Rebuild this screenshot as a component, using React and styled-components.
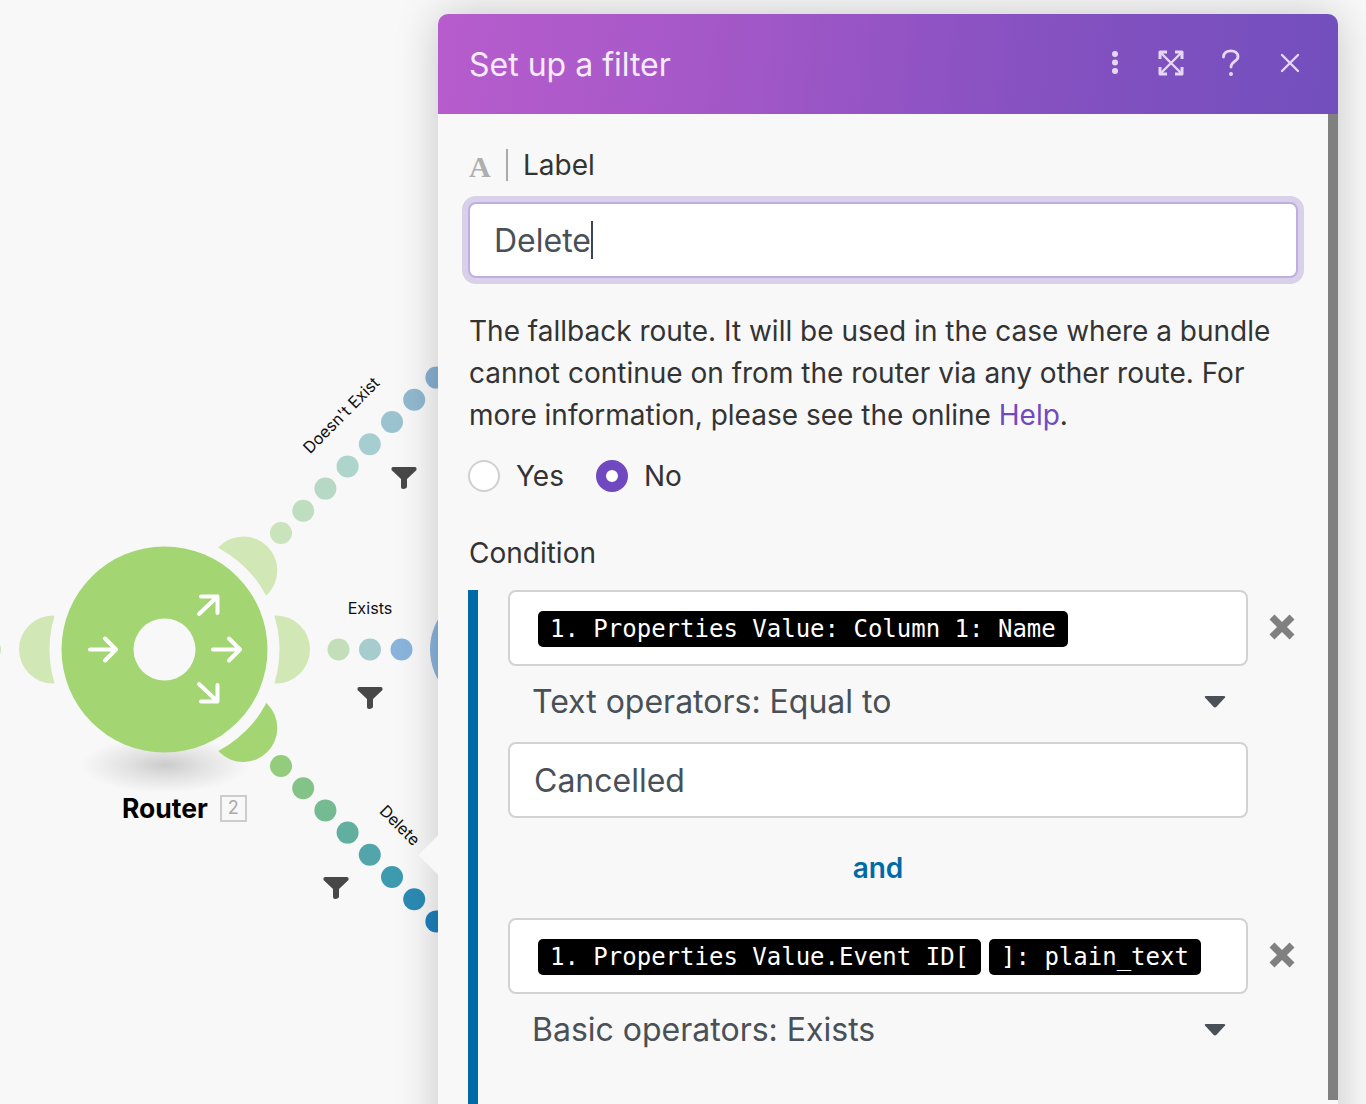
import React from "react";
import styled, { createGlobalStyle } from "styled-components";

const GlobalStyle = createGlobalStyle`
	html, body {
		margin: 0;
		padding: 0;
		background: #f8f8f8;
		font-family: Inter, "Noto Sans", sans-serif;
	}
`;

const Page = styled.div`
	position: relative;
	display: flex;
	width: 1366px;
	height: 1104px;
	padding: 14px 0 0 438px;
	box-sizing: border-box;
	overflow: hidden;
	background: #f8f8f8;
`;

/* free canvas: router diagram behind the panel */
const Canvas = styled.div`
	position: absolute;
	inset: 0;
`;

const CanvasSvg = styled.svg`
	position: absolute;
	top: 0;
	left: 0;
`;

const RouteLabel = styled.div`
	position: absolute;
	left: ${(p) => p.$x}px;
	top: ${(p) => p.$y}px;
	transform: translate(-50%, -50%) rotate(${(p) => p.$angle || 0}deg);
	font-size: 16.2px;
	line-height: 20px;
	color: #111;
	white-space: nowrap;
`;

const NodeName = styled.div`
	position: absolute;
	left: 122px;
	top: 793px;
	display: flex;
	align-items: center;
	gap: 12px;
	font-size: 26.5px;
	font-weight: 700;
	line-height: 30px;
	color: #000;
`;

const NodeBadge = styled.span`
	display: flex;
	align-items: center;
	justify-content: center;
	width: 27px;
	height: 27px;
	box-sizing: border-box;
	border: 2px solid #ccc;
	font-size: 18px;
	font-weight: 400;
	color: #aaa;
`;

const Panel = styled.div`
	position: relative;
	display: flex;
	flex-direction: column;
	width: 900px;
	height: 1200px;
	flex: none;
	border-radius: 10px 10px 0 0;
	background: #f8f8f8;
	box-shadow: 0 0 44px rgba(0, 0, 0, 0.2);
`;

/* little pointer on the panel's left edge, towards the edited route */
const Pointer = styled.span`
	position: absolute;
	left: -14px;
	top: 827px;
	width: 28px;
	height: 28px;
	background: #f8f8f8;
	transform: rotate(45deg);
`;

const Header = styled.div`
	position: relative;
	display: flex;
	align-items: center;
	height: 100px;
	flex: none;
	padding-left: 31px;
	border-radius: 10px 10px 0 0;
	background: linear-gradient(97deg, #b75ccd 0%, #a558c8 30%, #8751c1 65%, #724fbd 100%);
`;

const Title = styled.h1`
	flex: 1;
	margin: 0;
	font-size: 32px;
	font-weight: 400;
	color: #f5ebfb;
`;

const HeaderIcons = styled.div`
	display: flex;
	align-items: center;
	padding: 0 8px 3px 0;
`;

const IconSlot = styled.span`
	display: flex;
	justify-content: center;
	align-items: center;
	width: ${(p) => p.$w}px;
	color: #e6d8f5;
`;

const ScrollBar = styled.div`
	position: absolute;
	top: 100px;
	right: 0;
	width: 10px;
	height: 986px;
	background: #808080;
`;

const Body = styled.div`
	position: relative;
	display: flex;
	flex-direction: column;
	padding: 35px 0 0 30px;
`;

const LabelRow = styled.div`
	display: flex;
	align-items: center;
	height: 32px;
	padding-left: 1px;
	color: #333;
	font-size: 28px;
`;

const LabelGlyph = styled.span`
	width: 37px;
	font-family: "Liberation Serif", serif;
	font-weight: 700;
	font-size: 30px;
	line-height: 32px;
	padding-top: 4px;
	color: #aeaeae;
`;

const LabelDivider = styled.span`
	width: 2px;
	height: 32px;
	margin-right: 15px;
	background: #aaa;
`;

const TextBox = styled.div`
	display: flex;
	align-items: center;
	width: ${(p) => p.$width}px;
	height: 76px;
	box-sizing: border-box;
	padding-left: 24px;
	border: 2px solid ${(p) => (p.$focus ? "#c0aee0" : "#d2d2d2")};
	border-radius: 8px;
	background: #fff;
	font-size: 32px;
	color: #495057;
	${(p) => p.$focus && "box-shadow: 0 0 0 6px #d9d0ea;"}
`;

const FocusBox = styled(TextBox)`
	margin-top: 21px;
`;

const Caret = styled.span`
	width: 2px;
	height: 38px;
	background: #3a4653;
`;

const HelpText = styled.p`
	width: 829px;
	margin: 32px 0 0 1px;
	font-size: 28px;
	line-height: 42px;
	color: #333;
`;

const HelpLink = styled.span`
	color: #7049c0;
`;

const RadioRow = styled.div`
	display: flex;
	align-items: center;
	height: 32px;
	margin-top: 24px;
	font-size: 28px;
	color: #333;
`;

const RadioMark = styled.span`
	width: 32px;
	height: 32px;
	box-sizing: border-box;
	margin-right: 16px;
	border-radius: 50%;
	background: #fff;
	border: ${(p) => (p.$on ? "10px solid #7049c0" : "2px solid #d0d0d0")};
`;

const RadioText = styled.span`
	margin-right: 32px;
`;

const SectionTitle = styled.div`
	height: 32px;
	margin: 45px 0 0 1px;
	font-size: 28px;
	line-height: 32px;
	color: #333;
`;

const Conditions = styled.div`
	margin-top: 21px;
	padding-left: 30px;
	border-left: 10px solid #0069a8;
	height: 520px;
`;

const FieldRow = styled.div`
	display: flex;
	align-items: center;
`;

const TokenBox = styled(TextBox)`
	gap: 8px;
	padding: 2px 0 0 28px;
`;

const Token = styled.span`
	height: 36px;
	padding: 0 12px;
	border-radius: 5px;
	background: #000;
	color: #fff;
	font-family: "DejaVu Sans Mono", monospace;
	font-size: 24px;
	line-height: 36px;
	white-space: pre;
`;

const RemoveIcon = styled.svg`
	margin: 0 0 2px 21px;
	flex: none;
`;

const SelectRow = styled.div`
	display: flex;
	align-items: center;
	justify-content: space-between;
	width: 740px;
	height: 76px;
	box-sizing: border-box;
	padding: 0 22px 5px 24px;
	font-size: 32px;
	color: #495057;
`;

const AndLabel = styled.div`
	width: 740px;
	height: 100px;
	text-align: center;
	font-size: 28px;
	font-weight: 600;
	line-height: 100px;
	color: #0069a8;
`;

const topDots = ["#c9e3bb", "#bfdec0", "#b7d8c5", "#add5cb", "#a6ced0", "#9ac3cf", "#91b9cf", "#88b0d3"];
const bottomDots = ["#94cc7d", "#84c388", "#74bb92", "#60af9f", "#52a6ab", "#3e9aaf", "#2c8bb4", "#1d80bb"];
const middleDots = [
	{ x: 338.5, color: "#c3dfba" },
	{ x: 370, color: "#a6ccce" },
	{ x: 401.5, color: "#8ab4dc" },
];
const funnels = [
	{ x: 391.5, y: 467 },
	{ x: 357.5, y: 687 },
	{ x: 323.5, y: 877 },
];

const Funnel = ({ x, y }) => (
	<path
		transform={`translate(${x} ${y})`}
		fill="#484848"
		d="M1.5 0H23.5Q25 0 25 1.500V3L15.500 12V19.500Q15.500 20.700 14.400 21.200L12.300 22Q9.500 22.400 9.500 20V12L0 3V1.500Q0 0 1.500 0Z"
	/>
);

const RouterDiagram = () => (
	<CanvasSvg width="438" height="1104" viewBox="0 0 438 1104">
		<defs>
			<mask id="lobeGap" maskUnits="userSpaceOnUse" x="0" y="0" width="438" height="1104">
				<rect width="438" height="1104" fill="#fff" />
				<circle cx="164.5" cy="649.500" r="115" fill="#000" />
			</mask>
			<radialGradient id="nodeShadow">
				<stop offset="0%" stopColor="#000" stopOpacity="0.18" />
				<stop offset="45%" stopColor="#000" stopOpacity="0.09" />
				<stop offset="100%" stopColor="#000" stopOpacity="0" />
			</radialGradient>
		</defs>

		<ellipse cx="165" cy="765" rx="84" ry="28" fill="url(#nodeShadow)" />

		<circle cx="-10" cy="649.500" r="11" fill="#c9e3bb" />
		<g mask="url(#lobeGap)">
			<circle cx="53" cy="649.500" r="34" fill="#d1e7b6" />
			<circle cx="276" cy="649.500" r="34" fill="#d1e7b6" />
			<circle cx="243.3" cy="570.5" r="34" fill="#d1e7b6" />
			<circle cx="243.3" cy="728" r="34" fill="#a3d572" />
		</g>
		<circle cx="164.5" cy="649.500" r="103" fill="#a3d572" />
		<circle cx="164.5" cy="649.500" r="31" fill="#f8f8f8" />
		<g fill="none" stroke="#fff" strokeWidth="4" strokeLinecap="round" strokeLinejoin="round">
			<path d="M90 649.500H116M105 638.500L116 649.500L105 660.500" />
			<path d="M213 649.500H240M229 638.500L240 649.500L229 660.500" />
			<path d="M199 614L217.500 596.500M201 596.500H217.500V613" />
			<path d="M199 684L217.500 701.500M217.500 685V701.500H201" />
		</g>

		{topDots.map((color, i) => (
			<circle key={color} cx={281 + 22.2 * i} cy={533 - 22.2 * i} r="11" fill={color} />
		))}
		{bottomDots.map((color, i) => (
			<circle key={color} cx={281 + 22.2 * i} cy={766 + 22.2 * i} r="11" fill={color} />
		))}
		{middleDots.map((dot) => (
			<circle key={dot.x} cx={dot.x} cy="649.500" r="11" fill={dot.color} />
		))}
		<circle cx="490" cy="649.500" r="60" fill="#8ab4dc" />

		{funnels.map((f) => (
			<Funnel key={f.x} x={f.x} y={f.y} />
		))}
	</CanvasSvg>
);

const DotsIcon = () => (
	<svg width="8" height="26" viewBox="0 0 8 26" fill="currentColor">
		<circle cx="4" cy="4" r="3" />
		<circle cx="4" cy="12.500" r="3" />
		<circle cx="4" cy="21" r="3" />
	</svg>
);

const ExpandIcon = () => (
	<svg width="26" height="26" viewBox="0 0 26 26" fill="none" stroke="currentColor">
		<path d="M2 9V2H9M17 2H24V9M24 17V24H17M9 24H2V17" strokeWidth="3" strokeLinejoin="round" />
		<path d="M3 3L23 23M23 3L3 23" strokeWidth="2.4" />
	</svg>
);

const QuestionIcon = () => (
	<svg width="20" height="28" viewBox="0 0 20 28" fill="none" stroke="currentColor" strokeWidth="2.800" strokeLinecap="round">
		<path d="M2.500 8C2.500 4 5.800 1.800 9.800 1.800C14 1.800 17 4.200 17 7.800C17 12.500 10 12.500 10 18" />
		<circle cx="10" cy="25" r="2" fill="currentColor" stroke="none" />
	</svg>
);

const CloseIcon = () => (
	<svg width="20" height="20" viewBox="0 0 20 20" fill="none" stroke="currentColor" strokeWidth="2.400" strokeLinecap="round">
		<path d="M2 2L18 18M18 2L2 18" />
	</svg>
);

const RemoveButton = () => (
	<RemoveIcon width="26" height="26" viewBox="0 0 26 26" fill="none" stroke="#808080" strokeWidth="7">
		<path d="M3 3L23 23M23 3L3 23" />
	</RemoveIcon>
);

const SelectCaret = () => (
	<svg width="22" height="12" viewBox="0 0 22 12" fill="#495057">
		<path d="M2 0H20Q22 0 21 1.500L12.500 10.800Q11 12 9.500 10.800L1 1.500Q0 0 2 0Z" />
	</svg>
);

const App = () => {
	return (
		<Page>
			<GlobalStyle />
			<Canvas>
				<RouterDiagram />
				<RouteLabel $x={341} $y={415} $angle={-45}>
					Doesn&apos;t Exist
				</RouteLabel>
				<RouteLabel $x={370} $y={608}>
					Exists
				</RouteLabel>
				<RouteLabel $x={399.5} $y={825} $angle={45}>
					Delete
				</RouteLabel>
				<NodeName>
					Router
					<NodeBadge>2</NodeBadge>
				</NodeName>
			</Canvas>

			<Panel>
				<Pointer />
				<Header>
					<Title>Set up a filter</Title>
					<HeaderIcons>
						<IconSlot $w={30}>
							<DotsIcon />
						</IconSlot>
						<IconSlot $w={82}>
							<ExpandIcon />
						</IconSlot>
						<IconSlot $w={38}>
							<QuestionIcon />
						</IconSlot>
						<IconSlot $w={80}>
							<CloseIcon />
						</IconSlot>
					</HeaderIcons>
				</Header>
				<ScrollBar />
				<Body>
					<LabelRow>
						<LabelGlyph>A</LabelGlyph>
						<LabelDivider />
						Label
					</LabelRow>
					<FocusBox $width={830} $focus>
						Delete
						<Caret />
					</FocusBox>
					<HelpText>
						The fallback route. It will be used in the case where a bundle
						cannot continue on from the router via any other route. For more
						information, please see the online <HelpLink>Help</HelpLink>.
					</HelpText>
					<RadioRow>
						<RadioMark />
						<RadioText>Yes</RadioText>
						<RadioMark $on />
						<RadioText>No</RadioText>
					</RadioRow>
					<SectionTitle>Condition</SectionTitle>
					<Conditions>
						<FieldRow>
							<TokenBox $width={740}>
								<Token>1. Properties Value: Column 1: Name</Token>
							</TokenBox>
							<RemoveButton />
						</FieldRow>
						<SelectRow>
							Text operators: Equal to
							<SelectCaret />
						</SelectRow>
						<TextBox $width={740}>Cancelled</TextBox>
						<AndLabel>and</AndLabel>
						<FieldRow>
							<TokenBox $width={740}>
								<Token>1. Properties Value.Event ID[</Token>
								<Token>]: plain_text</Token>
							</TokenBox>
							<RemoveButton />
						</FieldRow>
						<SelectRow>
							Basic operators: Exists
							<SelectCaret />
						</SelectRow>
					</Conditions>
				</Body>
			</Panel>
		</Page>
	);
};

export default App;
